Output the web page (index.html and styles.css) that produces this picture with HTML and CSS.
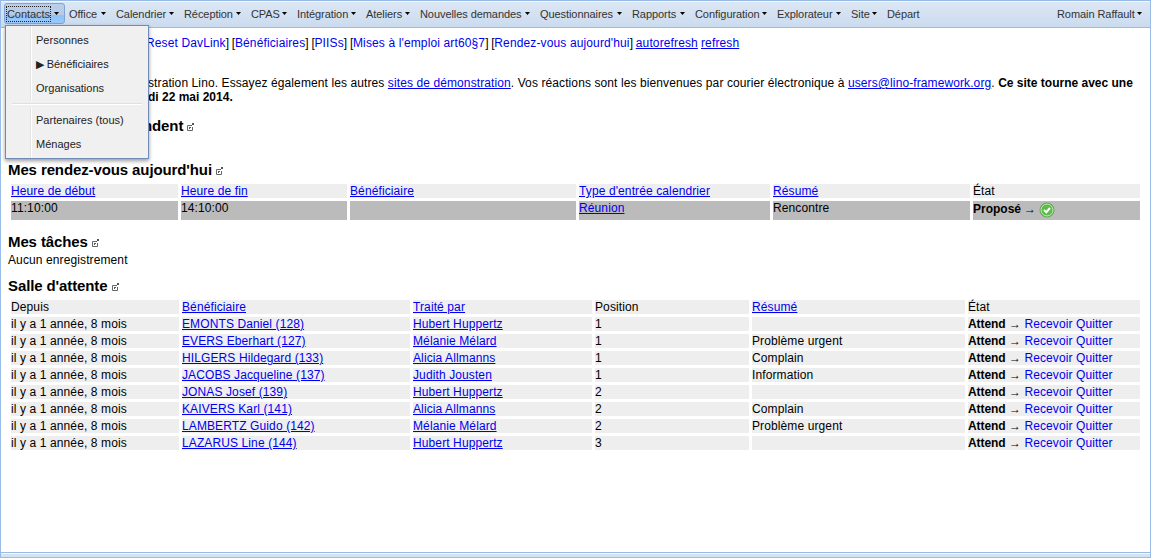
FILE: index.html
```html
<!DOCTYPE html>
<html lang="fr">
<head>
<meta charset="utf-8">
<title>Lino</title>
<link rel="stylesheet" href="styles.css">
</head>
<body>
<svg class="defs" width="0" height="0">
  <symbol id="ext" viewBox="0 0 8 8"><path d="M4 2.500H.5V7.500H5.500V4" fill="none" stroke="#666"/><path d="M5 0H7V2H6V1H5ZM4 2H5V3H4ZM5 1H6V2H5ZM2 4H4V5H3V6H2Z" fill="#555"/></symbol>
</svg>
<div class="viewport">
  <nav class="toolbar">
    <div class="btn active"><span class="focus">Contacts</span><i class="arrow"></i></div>
    <div class="btn office">Office<i class="arrow"></i></div>
    <div class="btn calendar">Calendrier<i class="arrow"></i></div>
    <div class="btn reception">Réception<i class="arrow"></i></div>
    <div class="btn cpas">CPAS<i class="arrow"></i></div>
    <div class="btn integration">Intégration<i class="arrow"></i></div>
    <div class="btn workshops">Ateliers<i class="arrow"></i></div>
    <div class="btn requests">Nouvelles demandes<i class="arrow"></i></div>
    <div class="btn surveys">Questionnaires<i class="arrow"></i></div>
    <div class="btn reports">Rapports<i class="arrow"></i></div>
    <div class="btn config">Configuration<i class="arrow"></i></div>
    <div class="btn explorer">Explorateur<i class="arrow"></i></div>
    <div class="btn site">Site<i class="arrow"></i></div>
    <div class="btn">Départ</div>
    <div class="btn user">Romain Raffault<i class="arrow"></i></div>
  </nav>
  <div class="menu">
    <div class="item">Personnes</div>
    <div class="item tight">▶ Bénéficiaires</div>
    <div class="item">Organisations</div>
    <div class="sep"></div>
    <div class="item">Partenaires (tous)</div>
    <div class="item">Ménages</div>
  </div>
  <main class="content">
    <p class="links"><span class="lead">Liens rapides: [</span><a class="plain">Reset DavLink</a>] [<a class="plain">Bénéficiaires</a>] [<a class="plain">PIISs</a>] [<a class="plain">Mises à l'emploi art60§7</a>] [<a class="plain">Rendez-vous aujourd'hui</a>] <a>autorefresh</a> <a>refresh</a></p>
    <p class="intro"><span class="lead">site de démon</span>stration Lino. Essayez également les autres <a>sites de démonstration</a>. Vos réactions sont les bienvenues par courier électronique à <a>users@lino-framework.org</a>. <b>Ce site tourne avec une<br><span class="lead">date simulée au jeu</span>di 22 mai 2014.</b></p>
    <h2 class="first"><span class="lead">Visiteurs atte</span>ndent <svg class="ext"><use href="#ext"/></svg></h2>
    <h2 class="rdv">Mes rendez-vous aujourd'hui <svg class="ext"><use href="#ext"/></svg></h2>
    <div class="grid appointments">
      <div><a>Heure de début</a></div><div><a>Heure de fin</a></div><div><a>Bénéficiaire</a></div><div><a>Type d'entrée calendrier</a></div><div><a>Résumé</a></div><div>État</div>
      <div class="dark">11:10:00</div><div class="dark">14:10:00</div><div class="dark"></div><div class="dark"><a>Réunion</a></div><div class="dark">Rencontre</div>
      <div class="dark state"><b>Proposé</b> <span>→</span> <svg class="ok" viewBox="0 0 16 16"><circle cx="8" cy="8" r="7" fill="#5dbb4b" stroke="#4a9a42" stroke-width=".8"/><circle cx="8" cy="8" r="6" fill="none" stroke="#c3e9ba" stroke-width="1"/><path d="M5 8L7.300 10.200L11 6" fill="none" stroke="#fff" stroke-width="2"/></svg></div>
    </div>
    <h2 class="tasks">Mes tâches <svg class="ext"><use href="#ext"/></svg></h2>
    <p class="empty">Aucun enregistrement</p>
    <h2 class="room">Salle d'attente <svg class="ext"><use href="#ext"/></svg></h2>
    <div class="grid waiting">
      <div>Depuis</div><div><a>Bénéficiaire</a></div><div><a>Traité par</a></div><div>Position</div><div><a>Résumé</a></div><div>État</div>
      <div>il y a 1 année, 8 mois</div><div><a>EMONTS Daniel (128)</a></div><div><a>Hubert Huppertz</a></div><div>1</div><div></div><div><b>Attend</b> → <a class="plain">Recevoir</a> <a class="plain">Quitter</a></div>
      <div>il y a 1 année, 8 mois</div><div><a>EVERS Eberhart (127)</a></div><div><a>Mélanie Mélard</a></div><div>1</div><div>Problème urgent</div><div><b>Attend</b> → <a class="plain">Recevoir</a> <a class="plain">Quitter</a></div>
      <div>il y a 1 année, 8 mois</div><div><a>HILGERS Hildegard (133)</a></div><div><a>Alicia Allmanns</a></div><div>1</div><div>Complain</div><div><b>Attend</b> → <a class="plain">Recevoir</a> <a class="plain">Quitter</a></div>
      <div>il y a 1 année, 8 mois</div><div><a>JACOBS Jacqueline (137)</a></div><div><a>Judith Jousten</a></div><div>1</div><div>Information</div><div><b>Attend</b> → <a class="plain">Recevoir</a> <a class="plain">Quitter</a></div>
      <div>il y a 1 année, 8 mois</div><div><a>JONAS Josef (139)</a></div><div><a>Hubert Huppertz</a></div><div>2</div><div></div><div><b>Attend</b> → <a class="plain">Recevoir</a> <a class="plain">Quitter</a></div>
      <div>il y a 1 année, 8 mois</div><div><a>KAIVERS Karl (141)</a></div><div><a>Alicia Allmanns</a></div><div>2</div><div>Complain</div><div><b>Attend</b> → <a class="plain">Recevoir</a> <a class="plain">Quitter</a></div>
      <div>il y a 1 année, 8 mois</div><div><a>LAMBERTZ Guido (142)</a></div><div><a>Mélanie Mélard</a></div><div>2</div><div>Problème urgent</div><div><b>Attend</b> → <a class="plain">Recevoir</a> <a class="plain">Quitter</a></div>
      <div>il y a 1 année, 8 mois</div><div><a>LAZARUS Line (144)</a></div><div><a>Hubert Huppertz</a></div><div>3</div><div></div><div><b>Attend</b> → <a class="plain">Recevoir</a> <a class="plain">Quitter</a></div>
    </div>
  </main>
  <footer class="statusbar"></footer>
</div>
</body>
</html>
```
FILE: styles.css
```css
* { box-sizing: border-box; }
body { margin: 0; font: 12px/14px "Liberation Sans", Arial, sans-serif; letter-spacing: .11px; color: #000; }
p, h2 { margin: 0; white-space: nowrap; }
b { letter-spacing: 0; }
a { color: #0000ee; text-decoration: underline; }
a.plain { text-decoration: none; }
.defs { position: absolute; }
.viewport { position: relative; width: 1151px; height: 558px; border: 1px solid #99bbe8; display: flex; flex-direction: column; overflow: hidden; background: #fff; }
.toolbar { height: 27px; flex: none; display: flex; align-items: flex-start; padding: 1px 8px 0 3px; border-top: 1px solid #f1f6fd; border-bottom: 1px solid #99bbe8; background: linear-gradient(#dce7f5, #cbdbee); font-size: 11px; letter-spacing: -.07px; color: #333; }
.btn { height: 21px; display: flex; align-items: center; padding-right: 10px; white-space: nowrap; flex: none; }
.btn.active { width: 61px; border: 1px solid #81a4d0; border-radius: 3px; padding: 0 5px 0 2px; margin-right: 4px; background: linear-gradient(#b8cfee 0, #b6cbe4 58%, #90c1f7 60%, #9ac8fa 100%); }
.office { width: 47px; }
.calendar { width: 68px; }
.reception { width: 67px; }
.cpas { width: 46px; }
.integration { width: 69px; }
.workshops { width: 54px; }
.requests { width: 120px; }
.surveys { width: 92px; }
.reports { width: 63px; }
.config { width: 82px; }
.explorer { width: 74px; }
.site { width: 36px; }
.focus { outline: 1px dotted #222; }
.btn.user { width: 85px; padding: 0; margin-left: auto; }
.arrow { width: 5px; height: 3px; margin-left: auto; background: #000; clip-path: polygon(0 0, 100% 0, 50% 100%); }
.menu { position: absolute; left: 4px; top: 24px; width: 144px; height: 134px; padding: 2px 0; border: 1px solid #718bb7; background: linear-gradient(90deg, #f0f0f0 24px, #e2e2e2 24px, #e2e2e2 25px, #fff 25px, #fff 26px, #f0f0f0 26px); box-shadow: 0 2px 4px rgba(0,0,0,.4); font-size: 11px; letter-spacing: .02px; color: #222; z-index: 2; }
.item { height: 24px; line-height: 24px; padding-left: 30px; white-space: nowrap; }
.tight { letter-spacing: -.1px; }
.sep { height: 8px; margin: 0 6px; background: linear-gradient(#f0f0f0 3px, #e0e0e0 3px, #e0e0e0 4px, #fff 4px, #fff 5px, #f0f0f0 5px); }
.content { flex: 1; padding: 8px 10px 0 7px; }
.lead { display: inline-flex; justify-content: flex-end; width: 140px; white-space: nowrap; }
.links { height: 40px; letter-spacing: -.28px; }
.links .lead { width: 138px; }
.links a { letter-spacing: .13px; }
.intro { height: 42px; letter-spacing: .1px; }
h2 { font-size: 15px; line-height: 18px; letter-spacing: -.11px; }
.first { height: 44px; margin-top: -1px; }
.first .lead { width: 135px; }
.rdv { height: 20px; }
.ext { width: 8px; height: 8px; vertical-align: 0; }
.grid { display: grid; gap: 3px; margin-left: 3px; }
.grid > div { height: 14px; background: #eee; white-space: nowrap; }
.appointments { padding-top: 3px; grid-template-columns: 167px 166px 226px 191px 197px 167px; }
.grid > .dark { height: 19px; background: #bbb; }
.state { display: flex; gap: 3px; padding-top: 1px; }
.ok { width: 16px; height: 16px; }
.tasks { margin-top: 13px; height: 20px; }
.empty { height: 24px; }
.room { height: 20px; }
.waiting { padding-top: 3px; grid-template-columns: 168px 228px 179px 154px 213px 172px; }
.waiting b { letter-spacing: -.08px; }
.waiting a.plain { letter-spacing: .08px; }
.statusbar { height: 5px; flex: none; border-top: 1px solid #99bbe8; background: linear-gradient(#f1f6fd 1px, #d5e2f2 1px); }
```
